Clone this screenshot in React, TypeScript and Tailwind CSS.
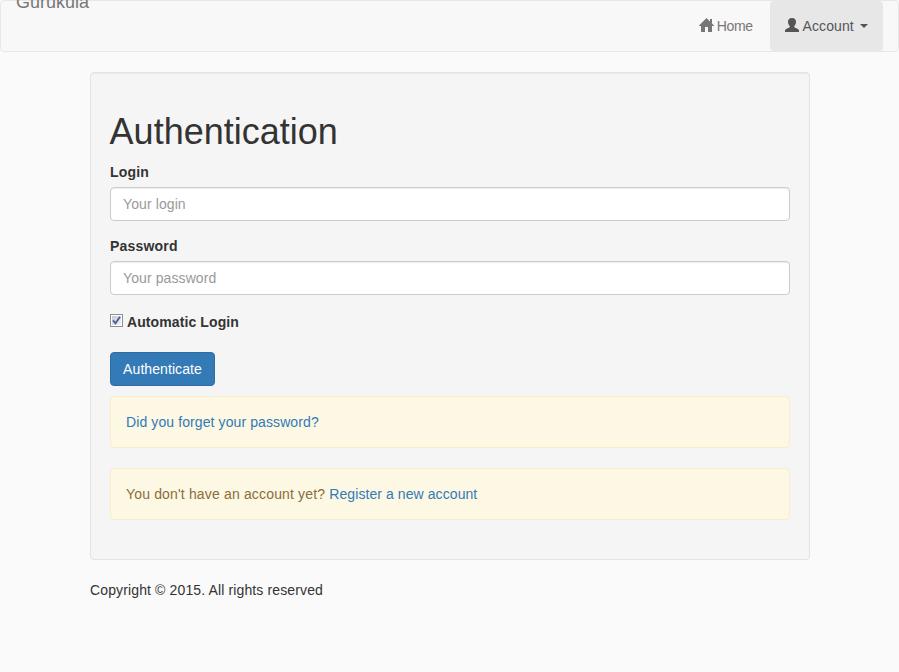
function HomeIcon() {
  return (
    <svg width="16" height="14" viewBox="0 0 16 14" className="mr-[2px] mb-[2px] shrink-0" fill="currentColor">
      <path d="M7.5 0L15 7.5V8H13V14H9V9H6V14H2V8H0V7.5Z" />
      <path d="M11 1H13V6L11 4Z" />
    </svg>
  );
}

function UserIcon() {
  return (
    <svg width="14" height="14" viewBox="0 0 14 14" className="mr-[4px] mb-[2px] shrink-0" fill="currentColor">
      <path d="M7 0C9.7 0 11 1.5 11 3.7C11 5.3 10.4 6.9 9.3 8V9.2C9.8 10 13 10.5 13.6 11.5C14 12.2 14 12.8 14 14H0C0 12.8 0 12.2.4 11.5C1 10.5 4.2 10 4.7 9.2V8C3.6 6.9 3 5.3 3 3.7C3 1.5 4.3 0 7 0Z" />
    </svg>
  );
}

function Field({ label, placeholder, type }: { label: string; placeholder: string; type: string }) {
  return (
    <label className="mb-[15px] block">
      <span className="mb-[5px] block font-bold tracking-[0.2px]">{label}</span>
      <input
        type={type}
        placeholder={placeholder}
        className="block h-[34px] w-full rounded-[4px] border border-[#ccc] bg-white px-3 py-1.5 tracking-[0.1px] shadow-[inset_0_1px_1px_rgba(0,0,0,0.075)] outline-none placeholder:text-[#999]"
      />
    </label>
  );
}

export default function App() {
  return (
    <div className="h-[672px] overflow-hidden bg-[#fafafa] font-['Liberation_Sans',Arial,sans-serif] text-[14px] leading-5 text-[#333]">
      <nav className="flex h-[52px] items-start justify-between rounded-[4px] border border-[#e7e7e7] bg-[#f8f8f8] px-[15px] text-[#777]">
        <a className="-mt-[9px] text-[18px] leading-5">Gurukula</a>
        <div className="flex h-[50px]">
          <a className="flex w-[86px] items-center pl-[15px]">
            <HomeIcon />
            <span className="-ml-[0.3px] tracking-[-0.3px]">Home</span>
          </a>
          <a className="flex w-[113px] items-center rounded-[4px] bg-[#e7e7e7] pl-[15px] text-[#555]">
            <UserIcon />
            <span className="-ml-[0.5px] w-[51.5px] tracking-[0.1px]">Account</span>
            <span className="ml-[6px] border-x-4 border-t-4 border-x-transparent border-t-[#555]" />
          </a>
        </div>
      </nav>

      <div className="mt-5 ml-[90px] w-[720px]">
        <main className="h-[488px] rounded-[4px] border border-[#e3e3e3] bg-[#f5f5f5] px-[19px] pt-[39px] shadow-[inset_0_1px_1px_rgba(0,0,0,0.05)]">
          <h1 className="mb-[10px] -ml-[0.4px] text-[36px] leading-[39.6px] font-medium">Authentication</h1>
          <Field label="Login" placeholder="Your login" type="text" />
          <Field label="Password" placeholder="Your password" type="password" />
          <label className="mt-[17px] mb-5 flex h-5 items-start font-bold tracking-[0.1px]">
            <span className="mt-[2px] mr-1 flex size-[13px] items-center justify-center border border-[#8e8f8f] bg-white">
              <span className="flex size-[9px] items-center justify-center bg-gradient-to-br from-[#c5cad5] to-[#f2f3f6]">
                <svg width="9" height="9" viewBox="0 0 9 9" fill="none" stroke="#4b6097" strokeWidth="1.9">
                  <path d="M1 4.4L3.5 7.3L8 .7" />
                </svg>
              </span>
            </span>
            Automatic Login
          </label>
          <button className="block h-[34px] w-[105px] rounded-[4px] border border-[#2e6da4] bg-[#337ab7] tracking-[0.08px] text-white">
            Authenticate
          </button>
          <div className="mt-[10px] mb-5 h-[52px] rounded-[4px] border border-[#faebcc] bg-[#fcf8e3] p-[15px]">
            <a className="tracking-[0.1px] text-[#337ab7]">Did you forget your password?</a>
          </div>
          <div className="h-[52px] rounded-[4px] border border-[#faebcc] bg-[#fcf8e3] p-[15px] text-[#8a6d3b]">
            <span className="tracking-[0.16px]">You don't have an account yet? </span>
            <a className="tracking-[0.08px] text-[#337ab7]">Register a new account</a>
          </div>
        </main>
        <footer className="mt-5 tracking-[0.13px]">Copyright © 2015. All rights reserved</footer>
      </div>
    </div>
  );
}
